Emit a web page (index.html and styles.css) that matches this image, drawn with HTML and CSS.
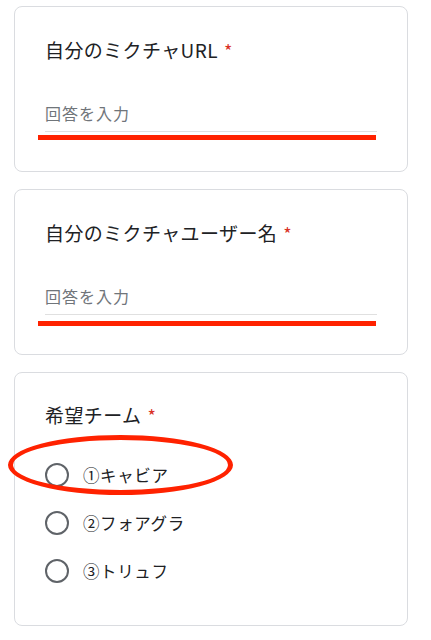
FILE: index.html
```html
<!DOCTYPE html>
<html lang="ja">
<head>
<meta charset="utf-8">
<link rel="stylesheet" href="styles.css">
</head>
<body>
<main class="form">
  <section class="card">
    <div class="title">自分のミクチャURL<span class="req">*</span></div>
    <div class="input"><span class="placeholder">回答を入力</span></div>
    <div class="mark-line mark-line-1"></div>
  </section>
  <section class="card">
    <div class="title">自分のミクチャユーザー名<span class="req">*</span></div>
    <div class="input"><span class="placeholder">回答を入力</span></div>
    <div class="mark-line mark-line-2"></div>
  </section>
  <section class="card card-choice">
    <div class="title">希望チーム<span class="req">*</span></div>
    <div class="options">
      <div class="option"><span class="radio"></span><span class="label">①キャビア</span></div>
      <div class="option"><span class="radio"></span><span class="label">②フォアグラ</span></div>
      <div class="option"><span class="radio"></span><span class="label">③トリュフ</span></div>
    </div>
    <div class="mark-ellipse"></div>
  </section>
</main>
</body>
</html>
```
FILE: styles.css
```css
* { box-sizing: border-box; }
html, body { margin: 0; padding: 0; background: #fff; }
body {
  font-family: "Noto Sans CJK JP", "Noto Sans", sans-serif;
  color: #202124;
}
.form {
  display: flex;
  flex-direction: column;
  gap: 17px;
  padding: 6px 23px 0 14px;
}
.card {
  position: relative;
  border: 1px solid #dadce0;
  border-radius: 8px;
  padding: 31px 30px 39px 30px;
  background: #fff;
}
.title {
  font-size: 19px;
  line-height: 24px;
  letter-spacing: 0.4px;
  white-space: nowrap;
}
.req {
  color: #d93025;
  margin-left: 6px;
  font-size: 18px;
  line-height: 1;
}
.input {
  margin-top: 39px;
  padding-bottom: 6px;
  border-bottom: 1px solid #e0e0e0;
  line-height: 24px;
}
.placeholder {
  font-size: 16px;
  letter-spacing: 1px;
  color: #70757a;
}
.mark-line {
  position: absolute;
  left: 23px;
  width: 338px;
  height: 5.5px;
  background: #ff2200;
}
.mark-line-1 { top: 127.5px; }
.mark-line-2 { top: 130.5px; }
.card-choice { padding-bottom: 30px; padding-top: 30px; }
.options {
  margin-top: 24px;
  display: flex;
  flex-direction: column;
}
.option {
  height: 48px;
  display: flex;
  align-items: center;
  gap: 14px;
}
.radio {
  width: 24px;
  height: 24px;
  border: 2.5px solid #5f6368;
  border-radius: 50%;
  flex: none;
}
.label {
  font-size: 16.5px;
  letter-spacing: 0.6px;
  color: #202124;
}
.mark-ellipse {
  position: absolute;
  left: -7px;
  top: 62px;
  width: 225px;
  height: 60px;
  border: 5px solid #ff2200;
  border-radius: 50%;
}
```
